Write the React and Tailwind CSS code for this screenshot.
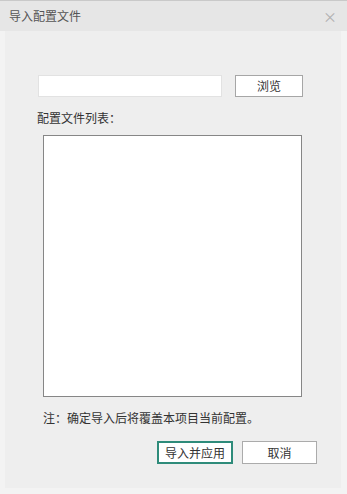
export default function App() {
  const font = { fontFamily: '"Noto Sans CJK SC", "Noto Sans", sans-serif' };
  return (
    <div className="w-[347px] h-[494px] flex flex-col bg-[#f3f3f3] border-t border-[#c9c9c9] text-[12px] text-[#333]" style={font}>
      <div className="h-[30px] shrink-0 bg-[#e6e6e6] flex items-center justify-between pl-[9px] pr-[10px]">
        <span className="text-[#555] text-[12px] leading-none">导入配置文件</span>
        <span className="text-[#b0b0b0] text-[14px] leading-none">×</span>
      </div>
      <div className="flex-1 flex flex-col pl-[5px] pr-[6px] pb-[6px]">
        <div className="flex-1 bg-[#eeeeee] flex flex-col pt-[44px]">
          <div className="flex items-center pl-[33px]">
            <div className="w-[184px] h-[22px] bg-white border border-[#e2e2e2]" />
            <button className="ml-[13px] w-[68px] h-[22px] bg-white border border-[#a6a6a6] text-[12px] leading-none text-[#333]">浏览</button>
          </div>
          <div className="pl-[32px] mt-[13px] leading-[16px]">配置文件列表：</div>
          <div className="ml-[38px] mt-[9px] w-[259px] h-[262px] bg-white border border-[#868686]" />
          <div className="pl-[38px] mt-[13px] leading-[16px]">注：确定导入后将覆盖本项目当前配置。</div>
          <div className="flex pl-[152px] mt-[15px] gap-[9px]">
            <button className="w-[76px] h-[23px] bg-white border-2 border-[#2e8b7a] text-[12px] leading-none text-[#333]">导入并应用</button>
            <button className="w-[75px] h-[23px] bg-white border border-[#ababab] text-[12px] leading-none text-[#333]">取消</button>
          </div>
        </div>
      </div>
    </div>
  );
}
